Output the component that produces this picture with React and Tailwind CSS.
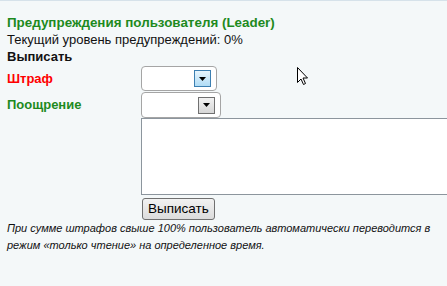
import React from "react";

function Arrow() {
  return (
    <svg width="7" height="4" viewBox="0 0 7 4">
      <path d="M0 0h7L3.5 4z" fill="#000" />
    </svg>
  );
}

function Select({ width, active }) {
  return (
    <div
      className="flex items-center justify-end rounded-[4px] border border-[#a5a5a5] bg-white pr-[5px]"
      style={{ width }}
    >
      <div
        className={
          active
            ? "flex h-[17px] w-[17px] items-center justify-center border border-[#3c7fb1] bg-gradient-to-b from-[#e7f5fd] to-[#b0dcf5]"
            : "flex h-[17px] w-[17px] items-center justify-center border border-[#707070] bg-gradient-to-b from-[#f2f2f2] to-[#d6d6d6]"
        }
      >
        <Arrow />
      </div>
    </div>
  );
}

export default function App() {
  return (
    <div
      className="relative h-[286px] w-[447px] overflow-hidden border-t border-[#d6e2ea] bg-[#f4f8f9] text-[#111]"
      style={{ fontFamily: '"Liberation Sans", Arial, sans-serif' }}
    >
      <div className="pl-[7px] pt-[13px]">
        <div className="text-[13.4px] font-bold leading-[17px] text-[#1e8a1e]">
          Предупреждения пользователя (Leader)
        </div>
        <div className="text-[13px] leading-[17px]">Текущий уровень предупреждений: 0%</div>
        <div className="text-[13px] font-bold leading-[17px]">Выписать</div>
      </div>
      <div className="mt-[1px] flex">
        <div className="w-[141px] shrink-0 pl-[7px]">
          <div className="flex h-[25px] items-center text-[13px] font-bold text-[#ff0000]">Штраф</div>
          <div className="mt-[1px] flex h-[26px] items-center text-[13px] font-bold text-[#1e8a1e]">
            Поощрение
          </div>
        </div>
        <div className="flex flex-col">
          <div className="flex h-[25px]">
            <Select width={76} active />
          </div>
          <div className="mt-[1px] flex h-[26px]">
            <Select width={80} />
          </div>
          <div className="h-[77px] w-[320px] border border-[#8c959d] border-r-0 bg-white" />
          <div className="mt-[1px] pl-[1px]">
            <button className="h-[22px] rounded-[3px] border border-[#707070] bg-gradient-to-b from-[#f2f2f2] to-[#dcdcdc] px-[5px] text-[13.5px] leading-[18px] text-black">
              Выписать
            </button>
          </div>
        </div>
      </div>
      <div className="pl-[7px] text-[11px] italic leading-[17px] text-[#111]">
        При сумме штрафов свыше 100% пользователь автоматически переводится в
        <br />
        режим «только чтение» на определенное время.
      </div>
      <svg className="absolute left-[297px] top-[66px]" width="12" height="19" viewBox="0 0 12 19">
        <path
          d="M0.5 0.5 L0.5 15.5 L4 12 L6.5 17.5 L8.5 16.5 L6 11 L10.5 11 Z"
          fill="#fff"
          stroke="#000"
          strokeWidth="1"
        />
      </svg>
    </div>
  );
}
